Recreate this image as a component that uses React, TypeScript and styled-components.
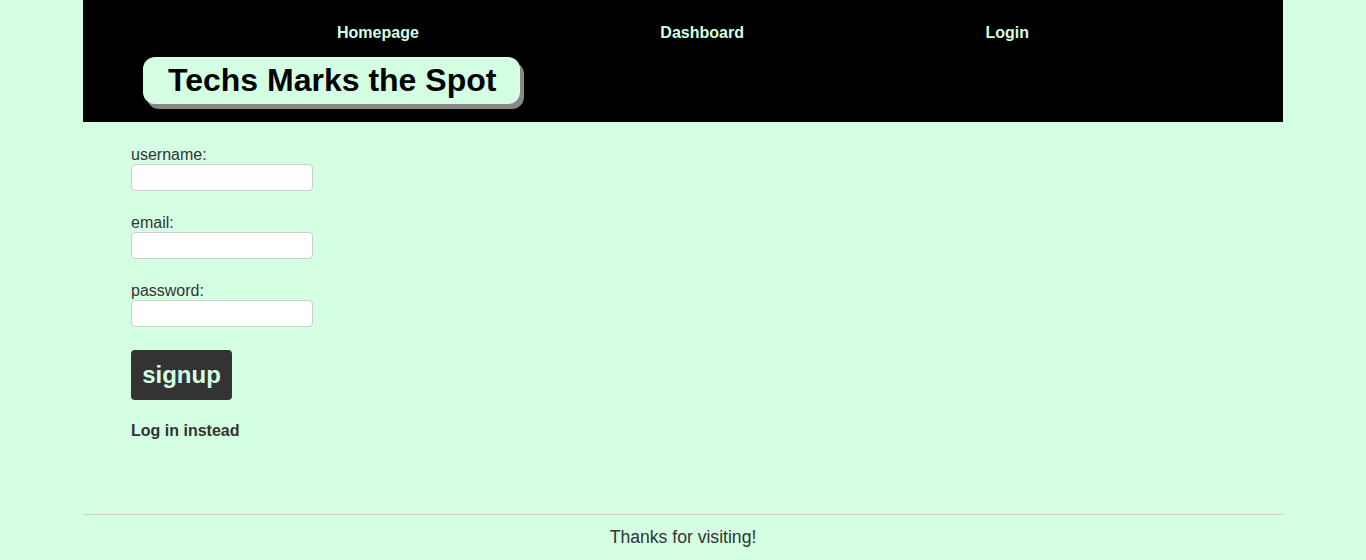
import React from "react";
import styled, { createGlobalStyle } from "styled-components";

const Global = createGlobalStyle`
  html, body { margin: 0; padding: 0; background: #d4ffe3; }
  body { font-family: "Liberation Sans", Arial, sans-serif; color: #333; }
`;

const Page = styled.div`
  width: 1200px;
  margin: 0 auto;
`;

const Header = styled.header`
  background: #000;
  height: 122px;
  box-sizing: border-box;
  padding-top: 24px;
`;

const Nav = styled.nav`
  display: flex;
  justify-content: space-between;
  margin: 0 254px;
`;

const NavLink = styled.a`
  color: #d4ffe3;
  font-weight: bold;
  font-size: 16px;
  line-height: 18px;
  text-decoration: none;
`;

const Title = styled.h1`
  display: inline-block;
  margin: 15px 0 0 60px;
  background: #d4ffe3;
  color: #000;
  font-size: 32px;
  line-height: 37px;
  padding: 5px 24px 5px 25px;
  border-radius: 12px;
  box-shadow: 4px 5px 0 #888;
`;

const Main = styled.main`
  padding: 24px 48px 0;
  height: 392px;
  box-sizing: border-box;
`;

const Form = styled.form`
  display: flex;
  flex-direction: column;
  align-items: flex-start;
`;

const Field = styled.div`
  display: flex;
  flex-direction: column;
  margin-bottom: 23px;
`;

const Label = styled.label`
  font-size: 16px;
  line-height: 18px;
`;

const Input = styled.input`
  width: 182px;
  height: 27px;
  box-sizing: border-box;
  border: 1px solid #ccc;
  border-radius: 4px;
  background: #fff;
  padding: 2px 6px;
  font-size: 14px;
`;

const Button = styled.button`
  width: 101px;
  height: 50px;
  background: #333;
  color: #d4ffe3;
  border: none;
  border-radius: 4px;
  font-family: "Liberation Sans", Arial, sans-serif;
  font-weight: bold;
  font-size: 24px;
  padding: 0;
`;

const SwitchLink = styled.a`
  margin-top: 22px;
  font-weight: bold;
  font-size: 16px;
  line-height: 18px;
  color: #333;
  text-decoration: none;
`;

const Footer = styled.footer`
  border-top: 1px solid #ccc;
  text-align: center;
  font-size: 17.6px;
  line-height: 21px;
  padding-top: 12px;
  color: #333;
`;

export default function App() {
  return (
    <>
      <Global />
      <Page>
        <Header>
          <Nav>
            <NavLink href="#">Homepage</NavLink>
            <NavLink href="#">Dashboard</NavLink>
            <NavLink href="#">Login</NavLink>
          </Nav>
          <Title>Techs Marks the Spot</Title>
        </Header>
        <Main>
          <Form onSubmit={(e) => e.preventDefault()}>
            <Field>
              <Label htmlFor="username">username:</Label>
              <Input id="username" type="text" />
            </Field>
            <Field>
              <Label htmlFor="email">email:</Label>
              <Input id="email" type="email" />
            </Field>
            <Field>
              <Label htmlFor="password">password:</Label>
              <Input id="password" type="password" />
            </Field>
            <Button type="submit">signup</Button>
            <SwitchLink href="#">Log in instead</SwitchLink>
          </Form>
        </Main>
        <Footer>Thanks for visiting!</Footer>
      </Page>
    </>
  );
}
